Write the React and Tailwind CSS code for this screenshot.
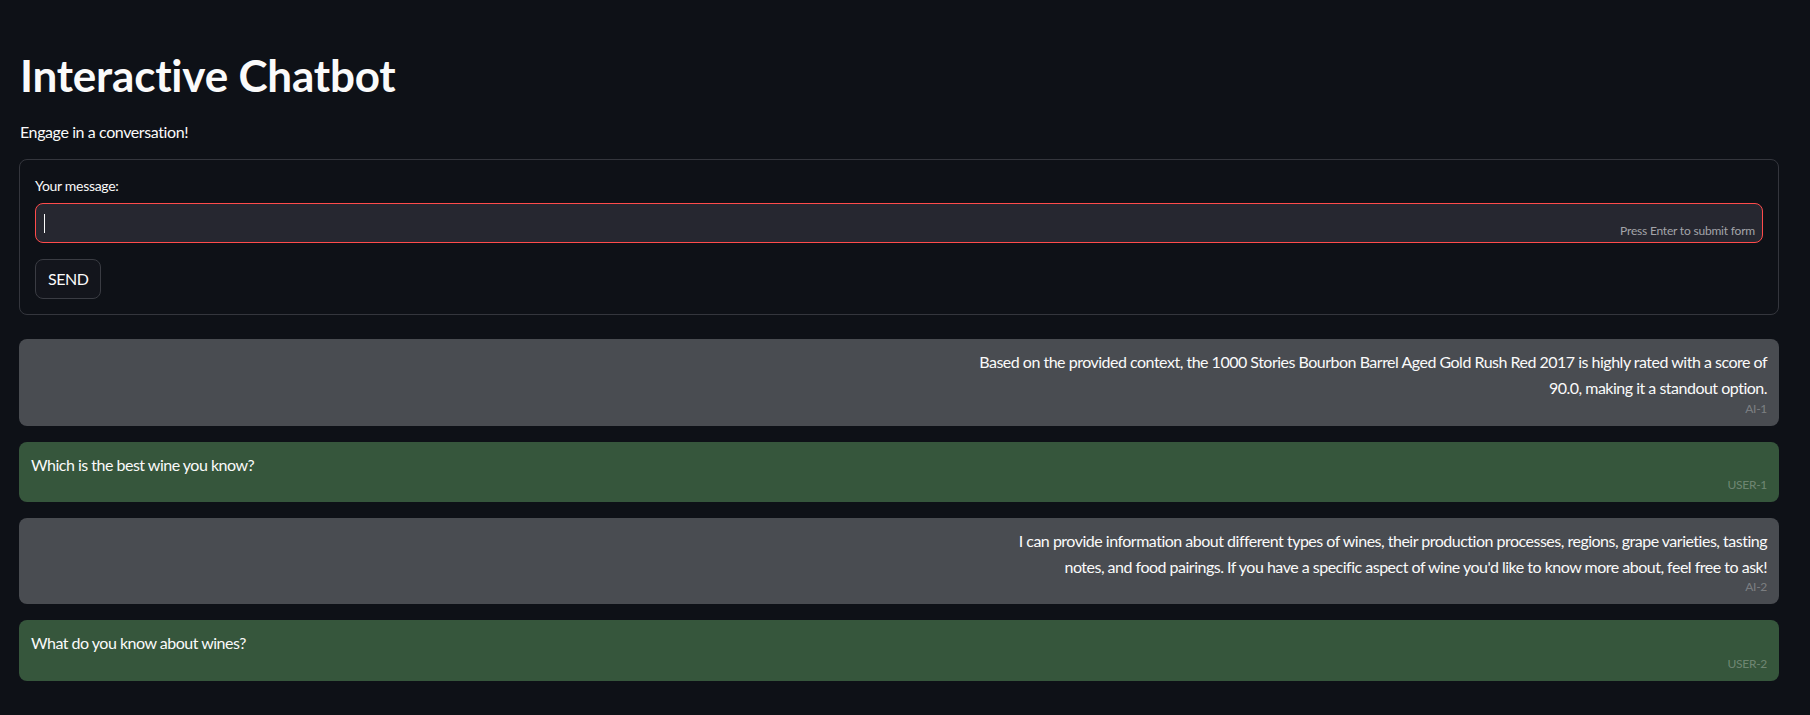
import React from "react";

const messages = [
  {
    role: "ai",
    lines: [
      "Based on the provided context, the 1000 Stories Bourbon Barrel Aged Gold Rush Red 2017 is highly rated with a score of",
      "90.0, making it a standout option.",
    ],
    tag: "AI-1",
  },
  { role: "user", lines: ["Which is the best wine you know?"], tag: "USER-1" },
  {
    role: "ai",
    lines: [
      "I can provide information about different types of wines, their production processes, regions, grape varieties, tasting",
      "notes, and food pairings. If you have a specific aspect of wine you'd like to know more about, feel free to ask!",
    ],
    tag: "AI-2",
  },
  { role: "user", lines: ["What do you know about wines?"], tag: "USER-2" },
];

export default function App() {
  return (
    <div className="min-h-screen bg-[#0e1117] text-[#fafafa] font-['Lato','Open_Sans',sans-serif]">
      <div className="pl-[19px] pr-[31px] pt-[49px] pb-[34px]">
        <h1 className="pl-[1px] text-[44px] font-bold leading-[1.2] tracking-[-0.2px]">
          Interactive Chatbot
        </h1>
        <p className="mt-[17px] pl-[1px] text-[16px] leading-[1.6] tracking-[-0.4px]">
          Engage in a conversation!
        </p>
        <form
          className="mt-[15px] rounded-lg border border-[#34363d] p-[15px]"
          onSubmit={(e) => e.preventDefault()}
        >
          <label className="block text-[14px] leading-[22px] tracking-[-0.3px]">Your message:</label>
          <div className="relative mt-[6px] flex h-[40px] items-center rounded-lg border border-[#ff4b4b] bg-[#262730] pl-[8px]">
            <span className="h-[19px] w-[1px] bg-[#fafafa]" />
            <span className="absolute right-[7px] bottom-[3px] text-[12px] leading-[16px] tracking-[-0.2px] text-[#a3a4a9]">
              Press Enter to submit form
            </span>
          </div>
          <button
            type="submit"
            className="mt-[16px] flex h-[40px] items-center rounded-lg border border-[#3a3c43] bg-[#13151c] px-[12px] text-[16px] leading-none tracking-[-0.5px] text-[#fafafa]"
          >
            SEND
          </button>
        </form>
        <div className="mt-[24px] flex flex-col gap-[16px]">
          {messages.map((m) => (
            <div
              key={m.tag}
              className={
                m.role === "ai"
                  ? "rounded-lg bg-[#494c51] px-[12px] pt-[10px] pb-[9px] text-right"
                  : "rounded-lg bg-[#36563c] px-[12px] pt-[10px] pb-[9px] text-left"
              }
            >
              {m.lines.map((l, i) => (
                <div
                  key={i}
                  className="text-[16px] leading-[25.6px] whitespace-nowrap tracking-[-0.5px]"
                >
                  {l}
                </div>
              ))}
              <div className="text-right text-[12px] leading-[16px] tracking-[-0.3px] text-[#fafafa4d]">
                {m.tag}
              </div>
            </div>
          ))}
        </div>
      </div>
    </div>
  );
}
